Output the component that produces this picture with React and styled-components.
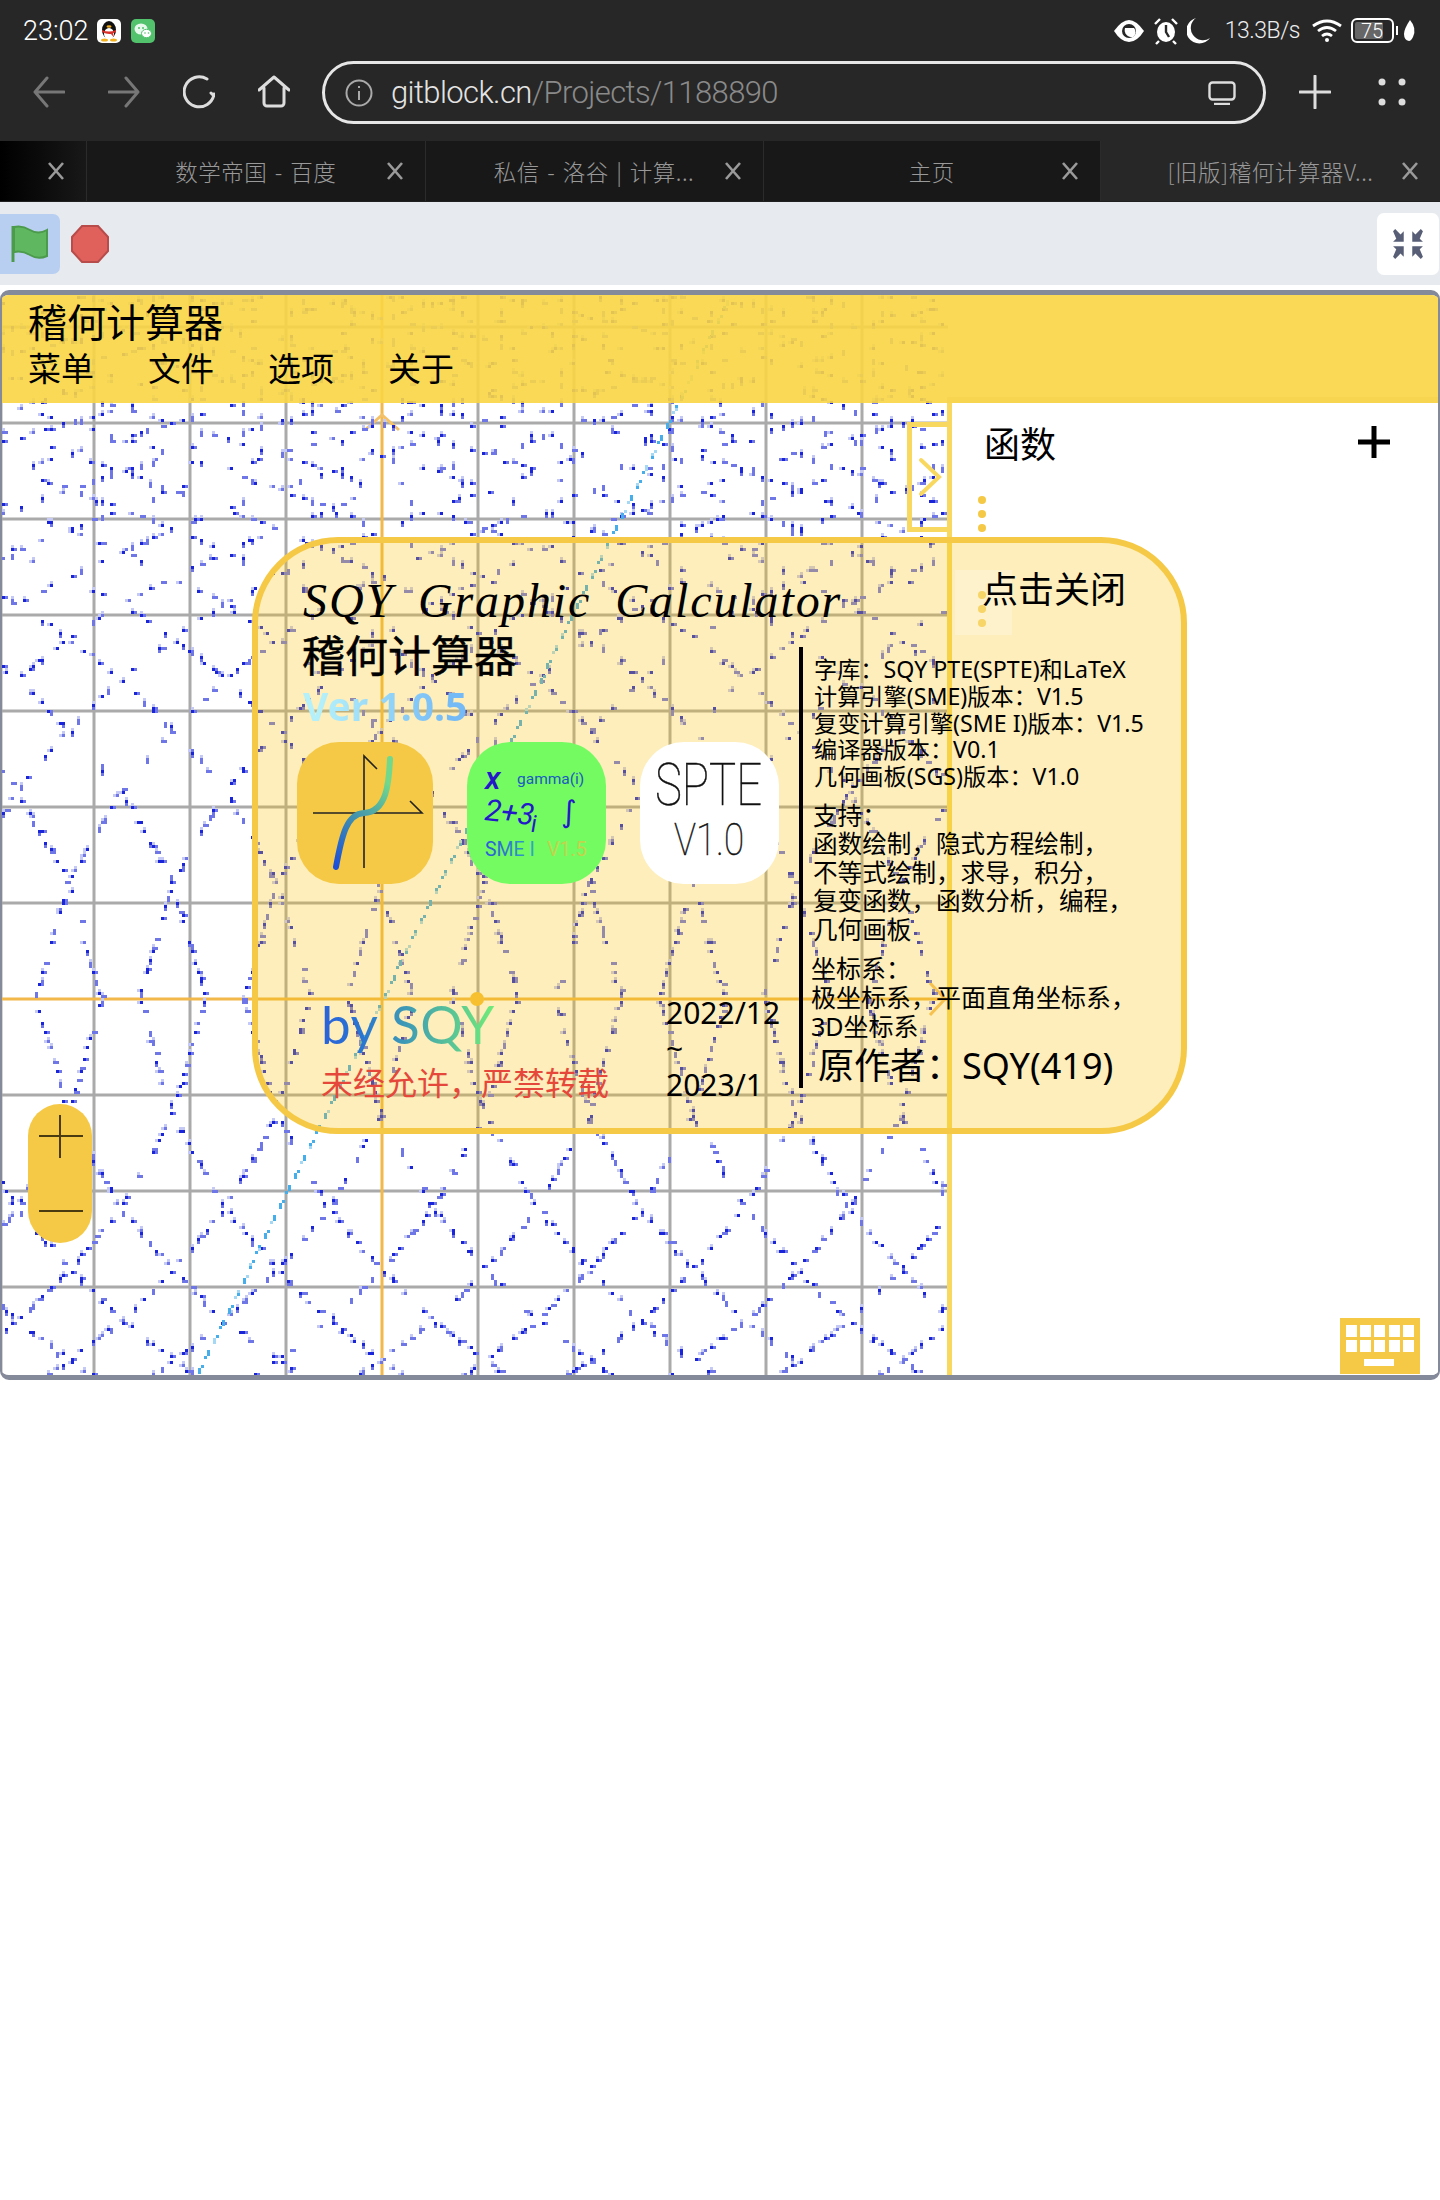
import React from "react";
import styled, { createGlobalStyle } from "styled-components";

const sans = `"Noto Sans", "Noto Sans CJK SC", sans-serif`;
const cjk = `"Noto Sans CJK SC", "Noto Sans", sans-serif`;

const GlobalStyle = createGlobalStyle`
	html, body {
		margin: 0;
		padding: 0;
		background: #fff;
		font-family: ${sans};
	}
`;

/* ---------- graph data: implicit curve sampled on a 3px grid ---------- */

const hash = (a, b) => {
	const s = Math.sin(a * 127.1 + b * 311.7) * 43758.5453;
	return s - Math.floor(s);
};

const warp = (d) => {
	const table = [
		[0, 2],
		[116, 0],
		[209, -Math.PI],
		[270, -2 * Math.PI],
		[321, -3 * Math.PI],
		[361, -4 * Math.PI],
	];
	for (let i = 1; i < table.length; i++) {
		if (d <= table[i][0]) {
			const [d0, v0] = table[i - 1];
			const [d1, v1] = table[i];
			return v0 + ((v1 - v0) * (d - d0)) / (d1 - d0);
		}
	}
	const over = d - 361;
	return -4 * Math.PI - over * 0.085 * (1 + over / 300);
};

const curve = (x, y) =>
	Math.cos(Math.PI + (2 * Math.PI * (x - 173)) / 104) + Math.cos(warp(Math.abs(y - 999)));

const pixel = (x, y) => `M${x} ${y}h3v3h-3z`;

// one small clump per 10px block, the plot in the picture is that sparse
function buildDots() {
	const dark = [];
	const mid = [];
	const pale = [];
	const taken = new Set();
	for (let x = 2; x < 948; x += 3) {
		for (let y = 296; y < 1375; y += 3) {
			const here = curve(x, y);
			const crosses = here * curve(x + 3, y) <= 0 || here * curve(x, y + 3) <= 0;
			if (!crosses) continue;
			const bx = Math.floor(x / 10);
			const by = Math.floor(y / 10);
			const key = `${bx}:${by}`;
			if (taken.has(key)) continue;
			taken.add(key);
			if (hash(bx, by) > (y > 800 ? 0.78 : 0.55)) continue;
			const shade = hash(x, y);
			if (shade < 0.6) dark.push(pixel(x, y));
			else mid.push(pixel(x, y));
			const extra = hash(y, x);
			if (extra < 0.4) mid.push(pixel(x + 3, y));
			else if (extra < 0.7) mid.push(pixel(x, y + 3));
			else pale.push(pixel(x - 3, y));
			if (hash(x + 1, y) < 0.4) pale.push(pixel(x, y - 3));
		}
	}
	return { dark: dark.join(""), mid: mid.join(""), pale: pale.join("") };
}

function buildTrace() {
	const strong = [];
	const soft = [];
	for (let y = 1374; y > 296; y -= 3) {
		const x = Math.round((195 + (1375 - y) / 2.02) / 3) * 3;
		if (y % 15 > 8) continue;
		if (hash(x, y) < 0.7) strong.push(pixel(x, y));
		else soft.push(pixel(x, y));
	}
	return { strong: strong.join(""), soft: soft.join("") };
}

const dots = buildDots();
const trace = buildTrace();
const gridX = [1, 94, 190, 286, 478, 574, 670, 766, 862];
const gridY = [327, 423, 519, 615, 711, 807, 903, 1095, 1191, 1287];

/* ---------- browser chrome ---------- */

const ChromeBar = styled.div`
	background: #272727;
	height: 141px;
	color: #fff;
`;

const StatusRow = styled.div`
	height: 61px;
	display: flex;
	align-items: center;
	padding: 0 23px 0 23px;
`;

const Clock = styled.span`
	font-family: Roboto, sans-serif;
	font-weight: 300;
	font-size: 27px;
	margin-right: 8px;
`;

const NetSpeed = styled.span`
	font-family: Roboto, sans-serif;
	font-weight: 300;
	font-size: 23px;
	letter-spacing: -0.5px;
	color: #eee;
	margin: 0 3px 0 6px;
`;

const StatusRight = styled.div`
	margin-left: auto;
	display: flex;
	align-items: center;
	gap: 9px;
`;

const AddressRow = styled.div`
	height: 80px;
	display: flex;
	align-items: flex-start;
	padding-left: 33px;
	gap: 43px;
`;

const NavIcon = styled.svg`
	width: 32px;
	height: 34px;
	margin-top: 14px;
	fill: none;
	stroke: ${(p) => p.$tone || "#ddd"};
	stroke-width: 3;
	stroke-linecap: round;
	stroke-linejoin: round;
	flex: none;
`;

const AddressBar = styled.div`
	box-sizing: border-box;
	width: 944px;
	height: 63px;
	margin-left: -11px;
	border: 3px solid #e6e6e6;
	border-radius: 32px;
	display: flex;
	align-items: center;
	padding: 0 27px 0 20px;
	flex: none;
`;

const UrlText = styled.div`
	font-family: Roboto, sans-serif;
	font-weight: 300;
	font-size: 31px;
	color: #e4e4e4;
	margin-left: 18px;
	letter-spacing: -0.6px;
	span {
		color: #8a8a8a;
	}
`;

const RightActions = styled.div`
	display: flex;
	gap: 47px;
	margin-left: -10px;
`;

const TabStrip = styled.div`
	height: 60px;
	display: grid;
	grid-template-columns: 87px 338.5px 338px 337.5px 1fr;
	background: #161616;
	border-bottom: 1px solid #202020;
	box-sizing: content-box;
`;

const Tab = styled.div`
	display: grid;
	grid-template-columns: 1fr auto 1fr;
	align-items: center;
	border-right: 1px solid #2b2b2b;
	background: ${(p) =>
		p.$active ? "#272727" : p.$fade ? "linear-gradient(90deg, #000, #181818)" : "#181818"};
	${(p) => p.$active && "border-right: none;"}
	color: #999;
	font-family: ${cjk};
	font-weight: 300;
	font-size: 22.5px;
	letter-spacing: 0.5px;
	word-spacing: 2px;
	white-space: nowrap;
`;

const TabTitle = styled.span`
	grid-column: 2;
`;

const TabClose = styled.svg`
	grid-column: 3;
	justify-self: end;
	width: 18px;
	height: 18px;
	margin-right: 21px;
	stroke: #9a9a9a;
	stroke-width: 2.6;
	fill: none;
`;

/* ---------- scratch player ---------- */

const ControlBar = styled.div`
	height: 83px;
	background: #e7ebef;
	display: flex;
	align-items: center;
`;

const FlagButton = styled.div`
	width: 60px;
	height: 60px;
	background: #b9cff1;
	border-radius: 0 7px 7px 0;
	display: flex;
	align-items: center;
	justify-content: center;
`;

const StopIcon = styled.svg`
	width: 38px;
	height: 38px;
	margin-left: 11px;
`;

const ShrinkButton = styled.div`
	margin-left: auto;
	margin-right: 1px;
	width: 62px;
	height: 62px;
	background: #fff;
	border-radius: 7px;
	display: flex;
	align-items: center;
	justify-content: center;
`;

const Stage = styled.div`
	box-sizing: border-box;
	position: relative;
	margin-top: 5px;
	height: 1090px;
	border: 2px solid #858a9b;
	border-width: 5px 2px;
	border-radius: 9px;
	overflow: hidden;
	background: #fff;
`;

const GraphCanvas = styled.svg`
	position: absolute;
	left: 0;
	top: 0;
`;

const AppHeader = styled.div`
	position: relative;
	box-sizing: border-box;
	height: 108px;
	padding: 3px 0 0 26px;
	background: rgba(248, 213, 68, 0.9);
	color: #000;
`;

const AppName = styled.div`
	font-family: ${cjk};
	font-size: 39px;
	line-height: 44px;
`;

const MenuRow = styled.div`
	display: flex;
	gap: 54px;
	font-family: ${cjk};
	font-size: 33px;
	line-height: 44px;
	margin-top: 3px;
`;

const Workspace = styled.div`
	position: relative;
	display: flex;
	height: 972px;
`;

const GraphArea = styled.div`
	width: 945px;
	display: flex;
	flex-direction: column;
	flex: none;
`;

const PaneToggle = styled.div`
	box-sizing: border-box;
	align-self: flex-end;
	width: 40px;
	height: 110px;
	margin-top: 19px;
	border: 5px solid #f8d85e;
	border-right: none;
	display: flex;
	align-items: center;
	justify-content: center;
`;

const ZoomPill = styled.div`
	margin-top: auto;
	margin-bottom: 132px;
	margin-left: 26px;
	width: 64px;
	height: 139px;
	background: #f5c945;
	border-radius: 32px;
`;

const FunctionPane = styled.div`
	flex: 1;
	border-left: 5px solid #f8d85e;
	background: #fff;
	display: flex;
	flex-direction: column;
	position: relative;
	&::before {
		content: "";
		position: absolute;
		left: -5px;
		right: 0;
		top: -6px;
		height: 6px;
		background: #f8d550;
	}
`;

const PaneHead = styled.div`
	display: flex;
	align-items: center;
	justify-content: space-between;
	padding: 15px 48px 0 32px;
	font-family: ${cjk};
	font-size: 36px;
	line-height: 48px;
	color: #000;
`;

const DragHandle = styled.div`
	display: flex;
	flex-direction: column;
	gap: 6px;
	margin: ${(p) => p.$top}px 0 0 26px;
	i {
		width: 8px;
		height: 8px;
		border-radius: 50%;
		background: #f5c945;
	}
`;

const KeyboardIcon = styled.svg`
	margin: auto 18px 1px auto;
	width: 80px;
	height: 56px;
`;

/* ---------- about popup ---------- */

const AboutPopup = styled.div`
	position: absolute;
	left: 250px;
	top: 242px;
	box-sizing: border-box;
	width: 935px;
	height: 597px;
	border: 6px solid #f5c945;
	border-radius: 86px;
	background: rgba(248, 195, 10, 0.28);
	display: flex;
	color: #000;
`;

const CloseGlow = styled.div`
	position: absolute;
	left: 697px;
	top: 27px;
	width: 57px;
	height: 65px;
	background: rgba(255, 255, 255, 0.25);
`;

const LeftColumn = styled.div`
	width: 541px;
	padding: 30px 0 0 39px;
	box-sizing: border-box;
	flex: none;
`;

const LatexTitle = styled.div`
	font-family: "Liberation Serif", serif;
	font-style: italic;
	font-size: 48px;
	line-height: 56px;
	letter-spacing: 1.9px;
	word-spacing: 10px;
	margin-left: 6px;
	white-space: nowrap;
`;

const CnTitle = styled.div`
	font-family: ${cjk};
	font-size: 43px;
	line-height: 46px;
	margin: 1px 0 0 5px;
	-webkit-text-stroke: 0.5px #000;
`;

const VersionTag = styled.div`
	display: inline-block;
	font-family: ${sans};
	font-weight: 700;
	font-size: 39px;
	line-height: 44px;
	margin: 8px 0 0 6px;
	background: linear-gradient(90deg, #b4f0fa 10%, #74baf6 90%);
	-webkit-background-clip: text;
	background-clip: text;
	color: transparent;
`;

const IconRow = styled.div`
	display: flex;
	gap: 34px;
	margin-top: 14px;
`;

const AppTile = styled.svg`
	display: block;
	height: 142px;
	width: ${(p) => p.$w}px;
	flex: none;
`;

const CreditRow = styled.div`
	display: flex;
	margin-top: 108px;
	padding-left: 24px;
`;

const CreditLeft = styled.div`
	width: 345px;
	flex: none;
`;

const ByLine = styled.div`
	display: inline-block;
	font-family: Lato, sans-serif;
	font-weight: 400;
	font-size: 53px;
	line-height: 64px;
	letter-spacing: 0.5px;
	background: linear-gradient(90deg, #2a62dc 0%, #2a78d0 25%, #3f9cb4 50%, #72ec78 100%);
	-webkit-background-clip: text;
	background-clip: text;
	color: transparent;
`;

const Warning = styled.div`
	font-family: ${cjk};
	font-size: 32px;
	line-height: 36px;
	margin-top: 7px;
	color: #e5483a;
	white-space: nowrap;
`;

const DateBlock = styled.div`
	font-family: ${sans};
	font-size: 30px;
	line-height: 36px;
	padding-top: 3px;
	white-space: nowrap;
`;

const RightColumn = styled.div`
	flex: 1;
	padding-top: 22px;
	display: flex;
	flex-direction: column;
`;

const CloseLabel = styled.div`
	font-family: ${cjk};
	font-size: 36px;
	line-height: 44px;
	margin-left: 183px;
	position: relative;
`;

const InfoBlock = styled.div`
	margin-top: 38px;
	border-left: 4px solid #000;
	padding: 9px 0 0 11px;
	height: 441px;
	box-sizing: border-box;
	white-space: nowrap;
	font-family: ${sans};
`;

const InfoGroup = styled.div`
	font-size: ${(p) => p.$size}px;
	line-height: ${(p) => p.$lh}px;
	margin: ${(p) => p.$mt || 0}px 0 0 ${(p) => p.$ml || 0}px;
`;

/* ---------- drawings ---------- */

const QqIcon = () => (
	<svg width="24" height="24" viewBox="0 0 24 24">
		<rect width="24" height="24" rx="5" fill="#fff" />
		<ellipse cx="12" cy="11" rx="7" ry="9" fill="#111" />
		<ellipse cx="12" cy="15" rx="5" ry="6" fill="#fff" />
		<ellipse cx="12" cy="7.5" rx="2.5" ry="1.3" fill="#f0b020" />
		<path d="M5 11q7 3 14 0v2q-2 1-3 1l.6 4-2.6-3q-4 .6-9-2z" fill="#d8302a" />
		<ellipse cx="7.5" cy="21" rx="3.5" ry="1.6" fill="#f0b020" />
		<ellipse cx="16.5" cy="21" rx="3.5" ry="1.6" fill="#f0b020" />
	</svg>
);

const WechatIcon = () => (
	<svg width="24" height="24" viewBox="0 0 24 24" style={{ marginLeft: 10 }}>
		<rect width="24" height="24" rx="5" fill="#52c26d" />
		<ellipse cx="10" cy="10" rx="6.5" ry="5.5" fill="#e8f8ec" />
		<ellipse cx="15.5" cy="14.5" rx="5" ry="4.2" fill="#fff" stroke="#52c26d" />
		<circle cx="8" cy="9" r="1" fill="#52c26d" />
		<circle cx="12" cy="9" r="1" fill="#52c26d" />
		<circle cx="14" cy="14" r=".8" fill="#52c26d" />
		<circle cx="17.5" cy="14" r=".8" fill="#52c26d" />
	</svg>
);

const EyeIcon = () => (
	<svg width="30" height="22" viewBox="0 0 30 22">
		<path d="M0 11Q8 0 15 0t15 11Q23 22 15 22T0 11z" fill="#fff" />
		<circle cx="15" cy="11" r="7" fill="#272727" />
		<path d="M11 8a7 7 0 0 0 8 9 6 6 0 0 0 1-9z" fill="#fff" />
	</svg>
);

const AlarmIcon = () => (
	<svg width="24" height="28" viewBox="0 0 24 28" style={{ marginLeft: 1 }}>
		<ellipse cx="12" cy="15" rx="9" ry="10" fill="#fff" />
		<path d="M12 8v7l3 5" stroke="#272727" strokeWidth="2.4" fill="none" />
		<path d="M1 7l5-5M23 7l-5-5M5 24l-3 3M19 24l3 3" stroke="#fff" strokeWidth="2.4" />
	</svg>
);

const MoonIcon = () => (
	<svg width="23" height="26" viewBox="0 0 23 26">
		<path d="M9 0a13 13 0 1 0 14 20A12 12 0 0 1 9 0z" fill="#fff" />
	</svg>
);

const WifiIcon = () => (
	<svg width="30" height="24" viewBox="0 0 30 24" fill="none" stroke="#fff" strokeWidth="2.8">
		<path d="M1 7q14-10 28 0M6 12q9-7 18 0M10 17q5-4 10 0" />
		<circle cx="15" cy="21" r="2" fill="#fff" stroke="none" />
	</svg>
);

const BatteryIcon = () => (
	<svg width="66" height="25" viewBox="0 0 66 25">
		<rect x="1" y="1" width="41" height="23" rx="5" fill="none" stroke="#fff" strokeWidth="2" />
		<rect x="4" y="4" width="28" height="17" rx="2" fill="#666" />
		<text x="21" y="20" textAnchor="middle" fontFamily="Roboto, sans-serif" fontWeight="300" fontSize="20" fill="#fff">
			75
		</text>
		<rect x="45" y="8" width="2" height="9" fill="#fff" />
		<path d="M59 2q7 8 3 17-2 4-4 4-5-1-5-7 0-5 6-14z" fill="#fff" />
	</svg>
);

const ArrowNav = ({ back }) => (
	<NavIcon viewBox="0 0 32 34" $tone="#777">
		<path d={back ? "M31 17H2M14 3L2 17l12 14" : "M1 17h29M18 3l12 14-12 14"} />
	</NavIcon>
);

const CloseX = () => (
	<TabClose viewBox="0 0 18 18">
		<path d="M2 1l14 16M16 1L2 17" />
	</TabClose>
);

const ShrinkIcon = () => (
	<svg width="32" height="32" viewBox="0 0 30 30" fill="#575e75">
		<path d="M1 3l2-2 5 5 3-3v10H1l3-3z" />
		<path d="M29 3l-2-2-5 5-3-3v10h10l-3-3z" />
		<path d="M1 27l2 2 5-5 3 3V17H1l3 3z" />
		<path d="M29 27l-2 2-5-5-3 3V17h10l-3 3z" />
	</svg>
);

const PlotTile = () => (
	<AppTile $w={136} viewBox="0 0 136 142">
		<defs>
			<linearGradient id="plotCurve" x1="0" y1="1" x2="0.4" y2="0">
				<stop offset="0" stopColor="#1d4fd8" />
				<stop offset="0.5" stopColor="#3f8fb0" />
				<stop offset="1" stopColor="#72d88c" />
			</linearGradient>
		</defs>
		<rect width="136" height="142" rx="42" fill="#f5c945" />
		<path d="M16 71h109l-12-12M67 126V14l13 13" fill="none" stroke="#222" strokeWidth="1.6" />
		<path d="M39 125C45 92 50 72 67 71 90 70 92 40 93 17" fill="none" stroke="url(#plotCurve)" strokeWidth="6" strokeLinecap="round" />
	</AppTile>
);

const EngineTile = () => (
	<AppTile $w={139} viewBox="0 0 139 142">
		<defs>
			<linearGradient id="smeLabel" x1="0" y1="0" x2="1" y2="0">
				<stop offset="0" stopColor="#2a58d8" />
				<stop offset="1" stopColor="#30a8c0" />
			</linearGradient>
		</defs>
		<rect width="139" height="142" rx="44" fill="#74fb62" />
		<g fontFamily="Roboto, sans-serif">
			<text x="18" y="47" fontSize="32" fontStyle="italic" fontWeight="500" fill="#2418c8">x</text>
			<text x="50" y="42" fontSize="15.5" fill="#1a5ac0">gamma(i)</text>
			<text x="17" y="78" fontSize="30" fontStyle="italic" fill="#2418c8" transform="rotate(6 17 78)">2+3</text>
			<text x="64" y="90" fontSize="24" fontStyle="italic" fill="#2418c8">i</text>
			<text x="94" y="80" fontSize="30" fontStyle="italic" fill="#2418c8" fontFamily="DejaVu Sans, sans-serif">∫</text>
			<text x="18" y="114" fontSize="19.5" fill="url(#smeLabel)">SME I</text>
			<text x="80" y="114" fontSize="19.5" fill="#c2d44c">V1.5</text>
		</g>
	</AppTile>
);

const SpteTile = () => (
	<AppTile $w={139} viewBox="0 0 139 142">
		<rect width="139" height="142" rx="44" fill="#fff" />
		<g fontFamily="Roboto, sans-serif" fontWeight="100" fill="#111" stroke="#111" strokeWidth="0.5">
			<text x="15" y="63" fontSize="60" textLength="107" lengthAdjust="spacingAndGlyphs">SPTE</text>
			<text x="34" y="113" fontSize="44" textLength="70" lengthAdjust="spacingAndGlyphs">V1.0</text>
		</g>
	</AppTile>
);

const tabs = [
	{ id: "t0", title: "", fade: true },
	{ id: "t1", title: "数学帝国 - 百度" },
	{ id: "t2", title: "私信 - 洛谷 | 计算..." },
	{ id: "t3", title: "主页" },
	{ id: "t4", title: "[旧版]稽何计算器V...", active: true },
];

export default function App() {
	return (
		<>
			<GlobalStyle />
			<ChromeBar>
				<StatusRow>
					<Clock>23:02</Clock>
					<QqIcon />
					<WechatIcon />
					<StatusRight>
						<EyeIcon />
						<AlarmIcon />
						<MoonIcon />
						<NetSpeed>13.3B/s</NetSpeed>
						<WifiIcon />
						<BatteryIcon />
					</StatusRight>
				</StatusRow>
				<AddressRow>
					<ArrowNav back />
					<ArrowNav />
					<NavIcon viewBox="0 0 32 34">
						<path d="M24 4A15 15 0 1 0 31 19M31 21l-3-3" />
					</NavIcon>
					<NavIcon viewBox="0 0 32 34">
						<path d="M1 15L16 2l15 13M6 13v15a3 3 0 0 0 3 3h14a3 3 0 0 0 3-3V13" />
					</NavIcon>
					<AddressBar>
						<svg width="28" height="28" viewBox="0 0 28 28" fill="none" stroke="#aaa" strokeWidth="2">
							<circle cx="14" cy="14" r="12.5" />
							<path d="M14 12v9M14 7v2" />
						</svg>
						<UrlText>
							gitblock.cn<span>/Projects/1188890</span>
						</UrlText>
						<svg width="28" height="24" viewBox="0 0 28 24" fill="none" stroke="#ddd" strokeWidth="2.4" style={{ marginLeft: "auto" }}>
							<rect x="1.5" y="1.5" width="25" height="17" rx="3" />
							<path d="M6 23h16" />
						</svg>
					</AddressBar>
					<RightActions>
						<NavIcon viewBox="0 0 32 34">
							<path d="M16 1v32M1 17h30" />
						</NavIcon>
						<svg width="28" height="34" viewBox="0 0 28 34" fill="#ddd" style={{ marginTop: 14 }}>
							<circle cx="4" cy="7" r="3.5" />
							<circle cx="24" cy="7" r="3.5" />
							<circle cx="4" cy="27" r="3.5" />
							<circle cx="24" cy="27" r="3.5" />
						</svg>
					</RightActions>
				</AddressRow>
			</ChromeBar>
			<TabStrip>
				{tabs.map((tab) => (
					<Tab key={tab.id} $active={tab.active} $fade={tab.fade}>
						<TabTitle>{tab.title}</TabTitle>
						<CloseX />
					</Tab>
				))}
			</TabStrip>
			<ControlBar>
				<FlagButton>
					<svg width="38" height="38" viewBox="0 0 38 38">
						<path d="M2 37V1" stroke="#4c9a4c" strokeWidth="3" />
						<path d="M3 2q8-2 16 3t17 0v26q-9 4-17-1T3 27z" fill="#5fb85f" stroke="#4c9a4c" strokeWidth="2" />
					</svg>
				</FlagButton>
				<StopIcon viewBox="0 0 38 38">
					<path d="M11 1h16l10 11v14L27 37H11L1 26V12z" fill="#e0605c" stroke="#b84c4a" strokeWidth="2" />
				</StopIcon>
				<ShrinkButton>
					<ShrinkIcon />
				</ShrinkButton>
			</ControlBar>
			<Stage>
				<GraphCanvas width="946" height="1080" viewBox="2 295 946 1080">
					{gridX.map((x) => (
						<rect key={x} x={x - 1.5} y="295" width="3" height="1080" fill="#aaa" />
					))}
					{gridY.map((y) => (
						<rect key={y} x="0" y={y - 1.5} width="948" height="3" fill="#aaa" />
					))}
					<rect x="380.5" y="295" width="3" height="1080" fill="#f2b84a" />
					<rect x="0" y="997.5" width="948" height="3" fill="#f2b84a" />
					<path d="M365 430l17-15 17 15" fill="none" stroke="#f5c168" strokeWidth="3" />
					<path d="M930 983l15 16-15 16" fill="none" stroke="#f5c168" strokeWidth="3" />
					<circle cx="477" cy="999" r="7" fill="#f5c040" />
					<path d={dots.pale} fill="#c5c9f6" />
					<path d={dots.mid} fill="#6f77e6" />
					<path d={dots.dark} fill="#1a25d9" />
					<path d={trace.soft} fill="#a5d8f5" />
					<path d={trace.strong} fill="#46aeea" />
				</GraphCanvas>
				<AppHeader>
					<AppName>稽何计算器</AppName>
					<MenuRow>
						<span>菜单</span>
						<span>文件</span>
						<span>选项</span>
						<span>关于</span>
					</MenuRow>
				</AppHeader>
				<Workspace>
					<GraphArea>
						<PaneToggle>
							<svg width="24" height="40" viewBox="0 0 24 40" fill="none" stroke="#f8d85e" strokeWidth="4" strokeLinecap="round">
								<path d="M3 3l18 17L3 37" />
							</svg>
						</PaneToggle>
						<ZoomPill>
							<svg width="64" height="139" viewBox="0 0 64 139" stroke="#4a3c10" strokeWidth="2" fill="none">
								<path d="M32 11v43M11 32h44M11 107h44" />
							</svg>
						</ZoomPill>
					</GraphArea>
					<FunctionPane>
						<PaneHead>
							<span>函数</span>
							<svg width="32" height="32" viewBox="0 0 32 32" stroke="#000" strokeWidth="5">
								<path d="M16 0v32M0 16h32" />
							</svg>
						</PaneHead>
						<DragHandle $top={30}>
							<i />
							<i />
							<i />
						</DragHandle>
						<DragHandle $top={59}>
							<i />
							<i />
							<i />
						</DragHandle>
						<KeyboardIcon viewBox="0 0 80 56">
							<rect width="80" height="56" fill="#f5c945" />
							{[7, 22].map((y) =>
								[6, 20, 34, 49, 63].map((x) => (
									<rect key={`${x}-${y}`} x={x} y={y} width="11" height="12" fill="#fff" />
								))
							)}
							<rect x="24" y="41" width="30" height="7" fill="#fff" />
						</KeyboardIcon>
					</FunctionPane>
				</Workspace>
				<AboutPopup>
					<CloseGlow />
					<LeftColumn>
						<LatexTitle>SQY Graphic Calculator</LatexTitle>
						<CnTitle>稽何计算器</CnTitle>
						<VersionTag>Ver 1.0.5</VersionTag>
						<IconRow>
							<PlotTile />
							<EngineTile />
							<SpteTile />
						</IconRow>
						<CreditRow>
							<CreditLeft>
								<ByLine>by SQY</ByLine>
								<Warning>未经允许，严禁转载</Warning>
							</CreditLeft>
							<DateBlock>
								2022/12
								<br />~<br />
								2023/1
							</DateBlock>
						</CreditRow>
					</LeftColumn>
					<RightColumn>
						<CloseLabel>点击关闭</CloseLabel>
						<InfoBlock>
							<InfoGroup $size={23.2} $lh={26.8}>
								字库：SQY PTE(SPTE)和LaTeX
								<br />
								计算引擎(SME)版本：V1.5
								<br />
								复变计算引擎(SME I)版本：V1.5
								<br />
								编译器版本：V0.1
								<br />
								几何画板(SGS)版本：V1.0
							</InfoGroup>
							<InfoGroup $size={24.6} $lh={28.5} $mt={12} $ml={-1}>
								支持：
								<br />
								函数绘制，隐式方程绘制，
								<br />
								不等式绘制，求导，积分，
								<br />
								复变函数，函数分析，编程，
								<br />
								几何画板
							</InfoGroup>
							<InfoGroup $size={25} $lh={29} $mt={10} $ml={-3}>
								坐标系：
								<br />
								极坐标系，平面直角坐标系，
								<br />
								3D坐标系
							</InfoGroup>
							<InfoGroup $size={36} $lh={44} $mt={3} $ml={4}>
								原作者：SQY(419)
							</InfoGroup>
						</InfoBlock>
					</RightColumn>
				</AboutPopup>
			</Stage>
		</>
	);
}
